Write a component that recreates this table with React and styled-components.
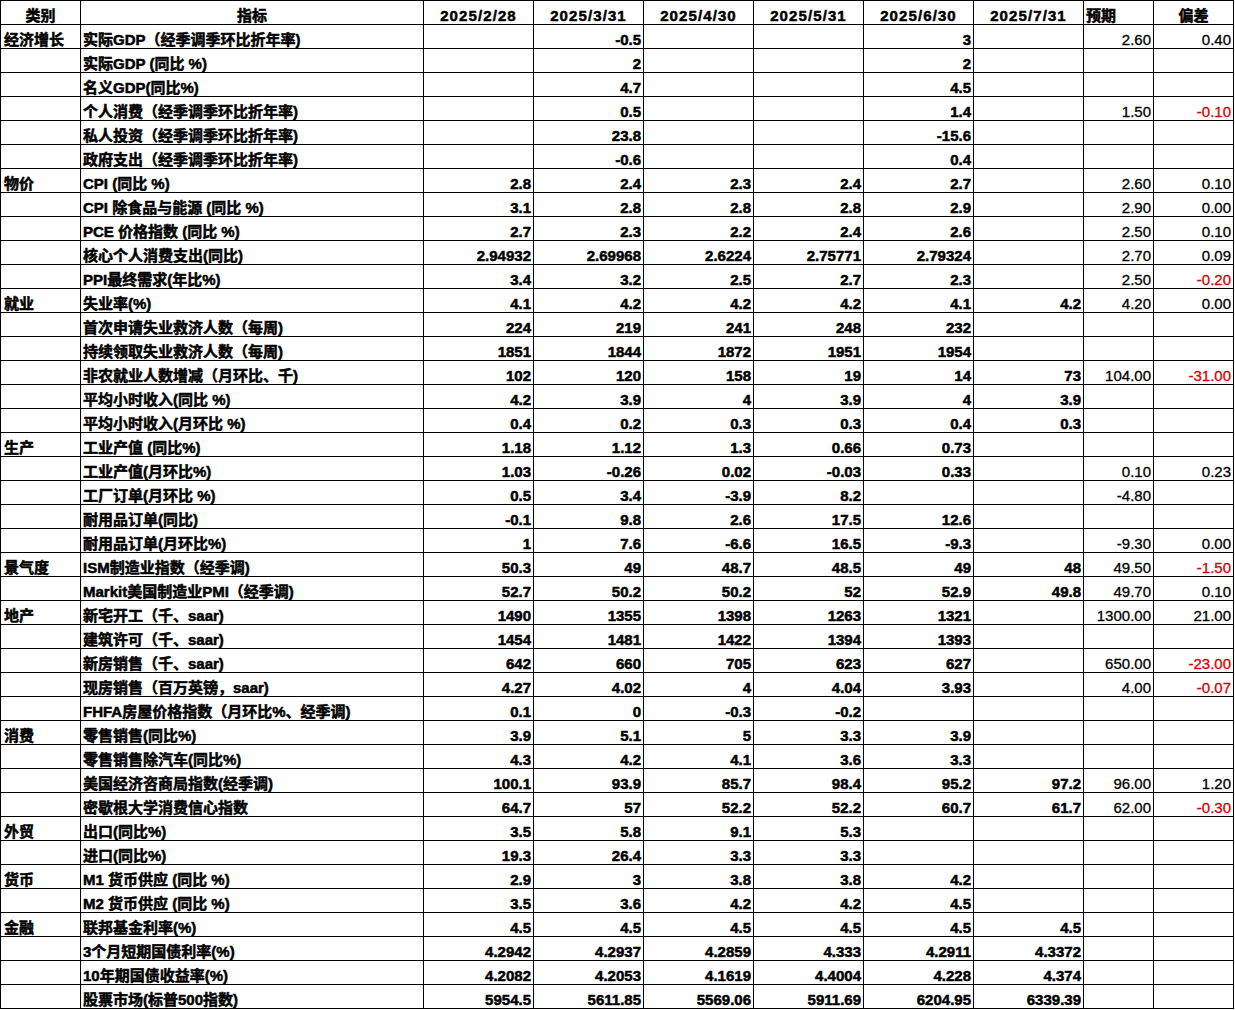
import React from "react";
import styled, { createGlobalStyle } from "styled-components";

const Global = createGlobalStyle`
  html, body { margin: 0; padding: 0; background: #ffffff; }
  body { font-family: "Liberation Sans", "Noto Sans CJK SC", sans-serif; color: #000; }
`;

const Sheet = styled.div`
  display: grid;
  grid-template-columns: 80px 343px repeat(6, 110px) 70px 80px;
  grid-auto-rows: 24px;
  width: 1234px;
  box-sizing: border-box;
  border-top: 1px solid #000;
  border-left: 1px solid #000;
`;

const Cell = styled.div`
  box-sizing: border-box;
  border-right: 1px solid #000;
  border-bottom: 1px solid #000;
  padding: 7px ${(p) => (p.$align === "right" ? "2px" : "1px")} 0
    ${(p) => (p.$align === "left" ? p.$indent || "1px" : "1px")};
  font-family: "Liberation Sans", "Noto Sans CJK SC", sans-serif;
  font-size: 15px;
  line-height: 16px;
  font-weight: ${(p) => (p.$regular ? 400 : 700)};
  -webkit-text-stroke: ${(p) => (p.$regular ? "0.3px" : "0.5px")} currentColor;
  color: ${(p) => (p.$red ? "#d80000" : "#000")};
  text-align: ${(p) => p.$align || "left"};
  white-space: nowrap;
  overflow: hidden;
  letter-spacing: ${(p) => p.$spacing || "normal"};
`;

const headers = [
  { t: "类别", align: "center" },
  { t: "指标", align: "center" },
  { t: "2025/2/28", align: "center", spacing: "1.1px" },
  { t: "2025/3/31", align: "center", spacing: "1.1px" },
  { t: "2025/4/30", align: "center", spacing: "1.1px" },
  { t: "2025/5/31", align: "center", spacing: "1.1px" },
  { t: "2025/6/30", align: "center", spacing: "1.1px" },
  { t: "2025/7/31", align: "center", spacing: "1.1px" },
  { t: "预期", align: "left", indent: "2px" },
  { t: "偏差", align: "center" },
];

const rows = [
  ["经济增长", "实际GDP（经季调季环比折年率)", ["", "-0.5", "", "", "3", ""], "2.60", "0.40"],
  ["", "实际GDP (同比 %)", ["", "2", "", "", "2", ""], "", ""],
  ["", "名义GDP(同比%)", ["", "4.7", "", "", "4.5", ""], "", ""],
  ["", "个人消费（经季调季环比折年率)", ["", "0.5", "", "", "1.4", ""], "1.50", "-0.10"],
  ["", "私人投资（经季调季环比折年率)", ["", "23.8", "", "", "-15.6", ""], "", ""],
  ["", "政府支出（经季调季环比折年率)", ["", "-0.6", "", "", "0.4", ""], "", ""],
  ["物价", "CPI (同比 %)", ["2.8", "2.4", "2.3", "2.4", "2.7", ""], "2.60", "0.10"],
  ["", "CPI 除食品与能源 (同比 %)", ["3.1", "2.8", "2.8", "2.8", "2.9", ""], "2.90", "0.00"],
  ["", "PCE 价格指数 (同比 %)", ["2.7", "2.3", "2.2", "2.4", "2.6", ""], "2.50", "0.10"],
  ["", "核心个人消费支出(同比)", ["2.94932", "2.69968", "2.6224", "2.75771", "2.79324", ""], "2.70", "0.09"],
  ["", "PPI最终需求(年比%)", ["3.4", "3.2", "2.5", "2.7", "2.3", ""], "2.50", "-0.20"],
  ["就业", "失业率(%)", ["4.1", "4.2", "4.2", "4.2", "4.1", "4.2"], "4.20", "0.00"],
  ["", "首次申请失业救济人数（每周)", ["224", "219", "241", "248", "232", ""], "", ""],
  ["", "持续领取失业救济人数（每周)", ["1851", "1844", "1872", "1951", "1954", ""], "", ""],
  ["", "非农就业人数增减（月环比、千)", ["102", "120", "158", "19", "14", "73"], "104.00", "-31.00"],
  ["", "平均小时收入(同比 %)", ["4.2", "3.9", "4", "3.9", "4", "3.9"], "", ""],
  ["", "平均小时收入(月环比 %)", ["0.4", "0.2", "0.3", "0.3", "0.4", "0.3"], "", ""],
  ["生产", "工业产值 (同比%)", ["1.18", "1.12", "1.3", "0.66", "0.73", ""], "", ""],
  ["", "工业产值(月环比%)", ["1.03", "-0.26", "0.02", "-0.03", "0.33", ""], "0.10", "0.23"],
  ["", "工厂订单(月环比 %)", ["0.5", "3.4", "-3.9", "8.2", "", ""], "-4.80", ""],
  ["", "耐用品订单(同比)", ["-0.1", "9.8", "2.6", "17.5", "12.6", ""], "", ""],
  ["", "耐用品订单(月环比%)", ["1", "7.6", "-6.6", "16.5", "-9.3", ""], "-9.30", "0.00"],
  ["景气度", "ISM制造业指数（经季调)", ["50.3", "49", "48.7", "48.5", "49", "48"], "49.50", "-1.50"],
  ["", "Markit美国制造业PMI（经季调)", ["52.7", "50.2", "50.2", "52", "52.9", "49.8"], "49.70", "0.10"],
  ["地产", "新宅开工（千、saar)", ["1490", "1355", "1398", "1263", "1321", ""], "1300.00", "21.00"],
  ["", "建筑许可（千、saar)", ["1454", "1481", "1422", "1394", "1393", ""], "", ""],
  ["", "新房销售（千、saar)", ["642", "660", "705", "623", "627", ""], "650.00", "-23.00"],
  ["", "现房销售（百万英镑，saar)", ["4.27", "4.02", "4", "4.04", "3.93", ""], "4.00", "-0.07"],
  ["", "FHFA房屋价格指数（月环比%、经季调)", ["0.1", "0", "-0.3", "-0.2", "", ""], "", ""],
  ["消费", "零售销售(同比%)", ["3.9", "5.1", "5", "3.3", "3.9", ""], "", ""],
  ["", "零售销售除汽车(同比%)", ["4.3", "4.2", "4.1", "3.6", "3.3", ""], "", ""],
  ["", "美国经济咨商局指数(经季调)", ["100.1", "93.9", "85.7", "98.4", "95.2", "97.2"], "96.00", "1.20"],
  ["", "密歇根大学消费信心指数", ["64.7", "57", "52.2", "52.2", "60.7", "61.7"], "62.00", "-0.30"],
  ["外贸", "出口(同比%)", ["3.5", "5.8", "9.1", "5.3", "", ""], "", ""],
  ["", "进口(同比%)", ["19.3", "26.4", "3.3", "3.3", "", ""], "", ""],
  ["货币", "M1 货币供应 (同比 %)", ["2.9", "3", "3.8", "3.8", "4.2", ""], "", ""],
  ["", "M2 货币供应 (同比 %)", ["3.5", "3.6", "4.2", "4.2", "4.5", ""], "", ""],
  ["金融", "联邦基金利率(%)", ["4.5", "4.5", "4.5", "4.5", "4.5", "4.5"], "", ""],
  ["", "3个月短期国债利率(%)", ["4.2942", "4.2937", "4.2859", "4.333", "4.2911", "4.3372"], "", ""],
  ["", "10年期国债收益率(%)", ["4.2082", "4.2053", "4.1619", "4.4004", "4.228", "4.374"], "", ""],
  ["", "股票市场(标普500指数)", ["5954.5", "5611.85", "5569.06", "5911.69", "6204.95", "6339.39"], "", ""],
];

export default function App() {
  return (
    <>
      <Global />
      <Sheet>
        {headers.map((h, i) => (
          <Cell key={"h" + i} $align={h.align} $spacing={h.spacing} $indent={h.indent}>
            {h.t}
          </Cell>
        ))}
        {rows.map(([cat, name, vals, exp, dev], r) => (
          <React.Fragment key={r}>
            <Cell $align="left" $indent="3px">{cat}</Cell>
            <Cell $align="left" $indent="2px">{name}</Cell>
            {vals.map((v, c) => (
              <Cell key={c} $align="right">{v}</Cell>
            ))}
            <Cell $align="right" $regular>{exp}</Cell>
            <Cell $align="right" $regular $red={dev.startsWith("-")}>{dev}</Cell>
          </React.Fragment>
        ))}
      </Sheet>
    </>
  );
}
